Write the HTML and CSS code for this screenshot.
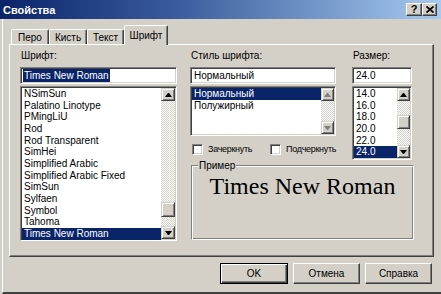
FILE: index.html
```html
<!DOCTYPE html>
<html>
<head>
<meta charset="utf-8">
<title>Свойства</title>
<link rel="stylesheet" href="styles.css">
</head>
<body>
<div class="window">
  <div class="titlebar">
    <span class="title">Свойства</span>
    <div class="tbtns">
      <div class="tbtn help">?</div>
      <div class="tbtn close"><svg width="8" height="7" viewBox="0 0 8 7"><path d="M0.5 0.5L7.5 6.5M7.5 0.5L0.5 6.5" stroke="#000" stroke-width="1.7"/></svg></div>
    </div>
  </div>
  <div class="client">
    <div class="tabs">
      <div class="tab t1">Перо</div>
      <div class="tab t2">Кисть</div>
      <div class="tab t3">Текст</div>
      <div class="tab active">Шрифт</div>
    </div>
    <div class="panel">
      <div class="col-font">
        <div class="label">Шрифт:</div>
        <div class="field"><span class="sel">Times New Roman</span></div>
        <div class="list list-font">
          <div class="items">
            <div class="item">NSimSun</div>
            <div class="item">Palatino Linotype</div>
            <div class="item">PMingLiU</div>
            <div class="item">Rod</div>
            <div class="item">Rod Transparent</div>
            <div class="item">SimHei</div>
            <div class="item">Simplified Arabic</div>
            <div class="item">Simplified Arabic Fixed</div>
            <div class="item">SimSun</div>
            <div class="item">Sylfaen</div>
            <div class="item">Symbol</div>
            <div class="item">Tahoma</div>
            <div class="item sel">Times New Roman</div>
          </div>
          <div class="sb sb-wide">
            <div class="sbtn"><i class="arr up"></i></div>
            <div class="track"><div class="thumb thumb-font"></div></div>
            <div class="sbtn"><i class="arr down"></i></div>
          </div>
        </div>
      </div>
      <div class="right">
        <div class="row-top">
          <div class="col-style">
            <div class="label">Стиль шрифта:</div>
            <div class="field">Нормальный</div>
            <div class="list list-style">
              <div class="items">
                <div class="item sel">Нормальный</div>
                <div class="item">Полужирный</div>
              </div>
              <div class="sb">
                <div class="sbtn"><i class="arr up dis"></i></div>
                <div class="track"></div>
                <div class="sbtn"><i class="arr down dis"></i></div>
              </div>
            </div>
            <div class="checks">
              <div class="check first"><span class="box"></span><span class="ctext">Зачеркнуть</span></div>
              <div class="check"><span class="box"></span><span class="ctext">Подчеркнуть</span></div>
            </div>
          </div>
          <div class="col-size">
            <div class="label">Размер:</div>
            <div class="field">24.0</div>
            <div class="list list-size">
              <div class="items">
                <div class="item">14.0</div>
                <div class="item">16.0</div>
                <div class="item">18.0</div>
                <div class="item">20.0</div>
                <div class="item">22.0</div>
                <div class="item sel">24.0</div>
              </div>
              <div class="sb">
                <div class="sbtn"><i class="arr up"></i></div>
                <div class="track"><div class="thumb thumb-size"></div></div>
                <div class="sbtn"><i class="arr down"></i></div>
              </div>
            </div>
          </div>
        </div>
        <div class="group">
          <div class="group-label">Пример</div>
          <div class="sample">Times New Roman</div>
        </div>
      </div>
    </div>
    <div class="buttons">
      <div class="btn default">OK</div>
      <div class="btn">Отмена</div>
      <div class="btn">Справка</div>
    </div>
  </div>
</div>
</body>
</html>
```
FILE: styles.css
```css
* { box-sizing: border-box; }
html, body { margin: 0; padding: 0; }
body {
  width: 441px;
  height: 294px;
  overflow: hidden;
  background: #d4d0c8;
  font-family: "Liberation Sans", Arial, sans-serif;
  font-size: 10px;
  color: #000;
}
.window { height: 294px; display: flex; flex-direction: column; }

.titlebar {
  height: 19px;
  flex: none;
  display: flex;
  align-items: center;
  justify-content: space-between;
  padding: 0 4px 0 3px;
  background: linear-gradient(90deg, #0a246a 0%, #3a5c9c 40%, #a6caf0 100%);
}
.title { color: #fff; font-weight: bold; font-size: 11px; }
.tbtns { display: flex; }
.tbtn {
  width: 16px;
  height: 13px;
  background: #d4d0c8;
  border: 1px solid;
  border-color: #fff #404040 #404040 #fff;
  box-shadow: inset -1px -1px #808080;
  display: flex;
  align-items: center;
  justify-content: center;
  font-weight: bold;
  font-size: 11px;
  line-height: 1;
}
.tbtn.close { width: 15px; }

.client {
  flex: 1;
  margin-left: 2px;
  border-left: 1px solid #fff;
  border-bottom: 2px solid #404040;
  display: flex;
  flex-direction: column;
}

.tabs {
  display: flex;
  align-items: flex-end;
  height: 19px;
  margin: 6px 0 0 8px;
}
.tab {
  height: 15px;
  border: 1px solid;
  border-bottom: none;
  border-color: #fff #404040 transparent #fff;
  box-shadow: inset -1px 0 #808080;
  border-radius: 2px 2px 0 0;
  padding-top: 1px;
  text-align: center;
  line-height: 13px;
  background: #d4d0c8;
}
.t1 { width: 38px; }
.t2 { width: 38px; }
.t3 { width: 37px; }
.tab.active {
  width: 44px;
  height: 20px;
  padding-top: 3px;
  margin-bottom: -1px;
  position: relative;
  z-index: 1;
}

.panel {
  margin-left: 6px;
  width: 425px;
  height: 213px;
  flex: none;
  border: 1px solid;
  border-color: #fff #404040 #404040 #fff;
  box-shadow: inset -1px -1px #808080;
  padding: 4px 0 0 10px;
  display: flex;
  align-items: flex-start;
}
.col-font { width: 157px; margin-right: 13px; display: flex; flex-direction: column; }
.right { width: 224px; display: flex; flex-direction: column; }
.row-top { display: flex; align-items: flex-start; }
.col-style { width: 146px; margin-right: 16px; display: flex; flex-direction: column; }
.col-size { width: 60px; display: flex; flex-direction: column; }

.label { line-height: 13px; height: 13px; margin-bottom: 5px; padding-left: 1px; white-space: nowrap; }

.field, .list, .box {
  background: #fff;
  border: 1px solid;
  border-color: #808080 #fff #fff #808080;
  box-shadow: inset 1px 1px #404040, inset -1px -1px #d4d0c8;
}
.field {
  height: 17px;
  padding: 0 0 0 3px;
  display: flex;
  align-items: center;
  line-height: 13px;
  white-space: nowrap;
}
.field .sel { background: #0a246a; color: #fff; padding: 0 1px; margin-left: -1px; }

.list {
  margin-top: 2px;
  display: flex;
  padding: 1px;
  overflow: hidden;
}
.list-font { height: 155px; }
.list-style { height: 50px; }
.list-size { height: 74px; }
.items { flex: 1; min-width: 0; }
.item { line-height: 11.67px; height: 11.67px; padding-left: 2px; white-space: nowrap; }
.item.sel { background: #0a246a; color: #fff; }

.sb { width: 13px; flex: none; display: flex; flex-direction: column; }
.sb-wide { width: 14px; }
.sbtn {
  height: 13px;
  flex: none;
  background: #d4d0c8;
  border: 1px solid;
  border-color: #d4d0c8 #404040 #404040 #d4d0c8;
  box-shadow: inset 1px 1px #fff, inset -1px -1px #808080;
  display: flex;
  align-items: center;
  justify-content: center;
}
.track {
  flex: 1;
  background: repeating-conic-gradient(#fff 0 25%, #d4d0c8 0 50%) 0 0 / 2px 2px;
}
.thumb {
  height: 15px;
  background: #d4d0c8;
  border: 1px solid;
  border-color: #d4d0c8 #404040 #404040 #d4d0c8;
  box-shadow: inset 1px 1px #fff, inset -1px -1px #808080;
}
.thumb-font { margin-top: 101px; }
.thumb-size { margin-top: 14px; height: 14px; }

.arr { display: block; width: 1px; height: 0; border-left: 3px solid transparent; border-right: 3px solid transparent; box-sizing: content-box; }
.arr.up { border-bottom: 4px solid #000; }
.arr.down { border-top: 4px solid #000; }
.arr.up.dis { border-bottom-color: #808080; }
.arr.down.dis { border-top-color: #808080; }

.checks { display: flex; align-items: center; margin-top: 8px; padding-left: 2px; height: 11px; }
.check { display: flex; align-items: center; gap: 5px; line-height: 11px; white-space: nowrap; }
.check.first { width: 78px; flex: none; }
.ctext { font-size: 9px; letter-spacing: -0.3px; }
.box { width: 11px; height: 11px; flex: none; }

.group {
  margin: 5px 0 0 1px;
  width: 223px;
  height: 75px;
  border: 1px solid;
  border-color: #808080 #fff #fff #808080;
  box-shadow: inset 1px 1px #fff, inset -1px -1px #808080;
}
.group-label {
  margin: -7px 0 0 6px;
  padding: 0 1px;
  width: fit-content;
  line-height: 13px;
  background: #d4d0c8;
}
.sample {
  font-family: "Liberation Serif", "Times New Roman", serif;
  font-size: 24px;
  line-height: 28px;
  text-align: center;
  white-space: nowrap;
}

.buttons {
  display: flex;
  justify-content: flex-end;
  gap: 5px;
  margin-top: 6px;
  padding-right: 9px;
}
.btn {
  width: 67px;
  height: 21px;
  background: #d4d0c8;
  border: 1px solid;
  border-color: #fff #404040 #404040 #fff;
  box-shadow: inset -1px -1px #808080;
  display: flex;
  align-items: center;
  justify-content: center;
}
.btn.default {
  width: 68px;
  border-color: #000;
  box-shadow: inset 1px 1px #fff, inset -1px -1px #404040, inset -2px -2px #808080;
}
```
